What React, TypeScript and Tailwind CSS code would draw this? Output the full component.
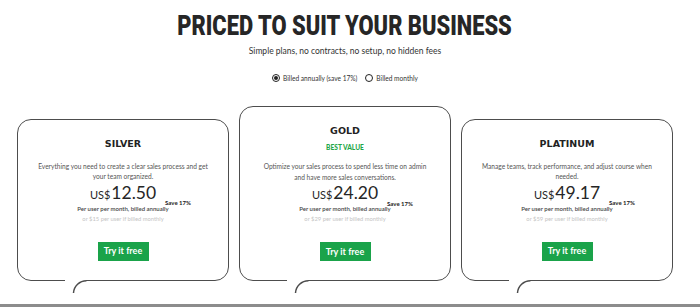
import React from "react";

type Plan = {
  name: string;
  badge?: string;
  desc: [string, string];
  price: string;
  monthly: string;
  h: string;
};

const plans: Plan[] = [
  {
    name: "SILVER",
    desc: ["Everything you need to create a clear sales process and get", "your team organized."],
    price: "12.50",
    monthly: "15",
    h: "h-[162px]",
  },
  {
    name: "GOLD",
    badge: "BEST VALUE",
    desc: ["Optimize your sales process to spend less time on admin", "and have more sales conversations."],
    price: "24.20",
    monthly: "29",
    h: "h-[175px]",
  },
  {
    name: "PLATINUM",
    desc: ["Manage teams, track performance, and adjust course when", "needed."],
    price: "49.17",
    monthly: "59",
    h: "h-[162px]",
  },
];

function Card({ p }: { p: Plan }) {
  return (
    <div
      className={`relative flex flex-col items-center w-[212px] ${p.h} rounded-[14px] border-[1.5px] border-[#4d4d4d] bg-white pt-[17.5px] text-center`}
    >
      <div className="font-['DejaVu_Sans',sans-serif] font-bold text-[9.5px] leading-[12px] text-[#222]">
        {p.name}
      </div>
      {p.badge && (
        <div className="mt-[6.5px] font-['Lato',sans-serif] font-black text-[6.6px] leading-[9px] text-[#1fa84a]">
          {p.badge}
        </div>
      )}
      <div
        className={`${p.badge ? "mt-[9px]" : "mt-[11px]"} font-['Lato',sans-serif] text-[6.6px] leading-[10.5px] text-[#555]`}
      >
        {p.desc[0]}
        <br />
        {p.desc[1]}
      </div>
      <div className="mt-[2px] flex items-baseline font-['Lato',sans-serif] leading-[18px] text-[#262626]">
        <span className="relative flex items-baseline">
          <span className="text-[11px] mr-[1px]">US$</span>
          <span className="text-[17.5px]">{p.price}</span>
          <span className="absolute left-[calc(100%+9px)] bottom-[-2.5px] whitespace-nowrap font-bold text-[6px] leading-[6px] text-[#222]">
            Save 17%
          </span>
        </span>
      </div>
      <div className="mt-[1px] font-['Lato',sans-serif] font-semibold text-[6px] leading-[8px] text-[#444]">
        Per user per month, billed annually
      </div>
      <div className="mt-[2px] font-['Lato',sans-serif] text-[5.8px] leading-[8px] text-[#c4c4c4]">
        or ${p.monthly} per user if billed monthly
      </div>
      <button className="mt-[19px] flex h-[19px] w-[51px] items-center justify-center bg-[#1aa34a] font-['Lato',sans-serif] font-bold text-[9px] text-white">
        Try it free
      </button>
      <svg
        className="absolute left-[47px] top-full overflow-visible"
        width="24"
        height="16"
        viewBox="0 0 24 16"
      >
        <rect x="0" y="-0.5" width="21" height="2.5" fill="#fff" />
        <path d="M 8.5 13 A 13 13 0 0 1 21.5 0.75" fill="none" stroke="#4d4d4d" strokeWidth="1.5" />
      </svg>
    </div>
  );
}

function Radio({ checked, label }: { checked: boolean; label: string }) {
  return (
    <div className="flex items-center gap-[3px]">
      <span className="flex h-[8px] w-[8px] items-center justify-center rounded-full border-[1.2px] border-[#222]">
        {checked && <span className="h-[4px] w-[4px] rounded-full bg-[#222]" />}
      </span>
      <span className="font-['Lato',sans-serif] text-[6.6px] leading-[12px] text-[#333]">{label}</span>
    </div>
  );
}

export default function App() {
  return (
    <div className="flex h-[307px] w-[700px] flex-col overflow-hidden bg-white">
      <div className="flex flex-col items-center pr-[10px]">
        <h1 className="mt-[13px] h-[27px] scale-x-[0.81] whitespace-nowrap font-['Roboto',sans-serif] text-[27px] font-black leading-[27px] text-[#262626]">
          PRICED TO SUIT YOUR BUSINESS
        </h1>
        <p className="mt-[5px] font-['Lato',sans-serif] text-[8.5px] leading-[12px] text-[#333]">
          Simple plans, no contracts, no setup, no hidden fees
        </p>
        <div className="mt-[15px] flex h-[12px] items-center gap-[8px]">
          <Radio checked label="Billed annually (save 17%)" />
          <Radio checked={false} label="Billed monthly" />
        </div>
      </div>
      <div className="mt-[22px] flex items-end gap-[10px] pl-[17px]">
        {plans.map((p) => (
          <Card key={p.name} p={p} />
        ))}
      </div>
      <div className="mt-[23px] h-[3px] w-full bg-[#8c8c8c]" />
    </div>
  );
}
